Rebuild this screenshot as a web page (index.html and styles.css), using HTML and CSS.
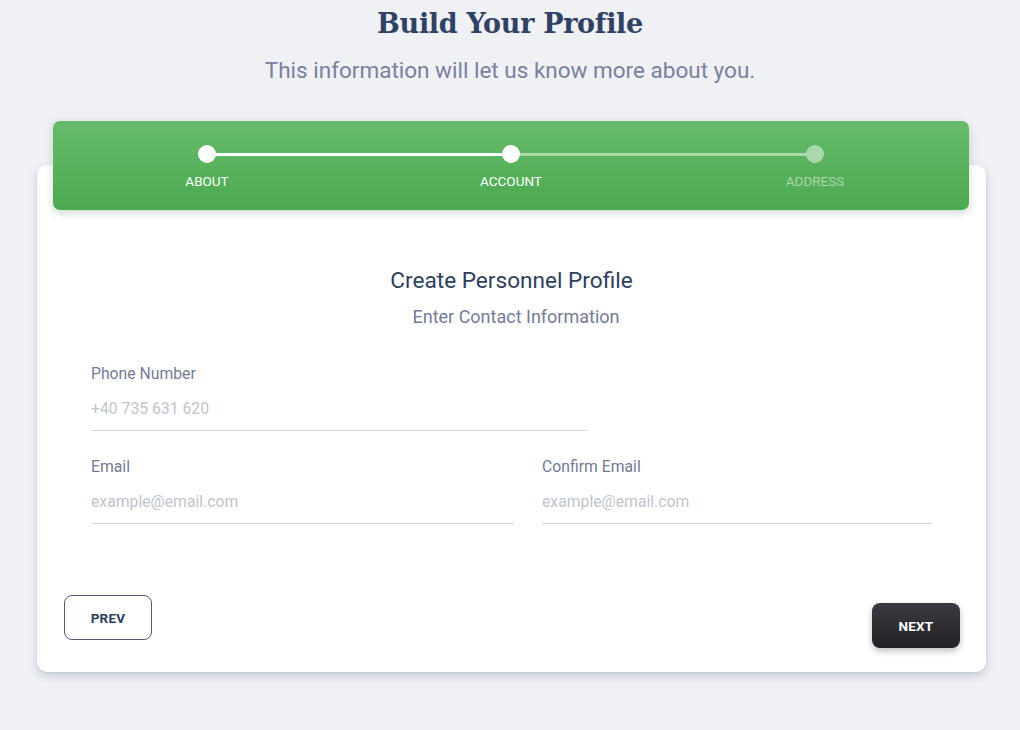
FILE: index.html
```html
<!DOCTYPE html>
<html lang="en">
<head>
<meta charset="utf-8">
<title>Build Your Profile</title>
<link rel="stylesheet" href="styles.css">
</head>
<body>
<main class="page">
  <h1 class="title">Build Your Profile</h1>
  <p class="subtitle">This information will let us know more about you.</p>

  <section class="card">
    <div class="steps-bar">
      <div class="step done">
        <span class="dot"></span>
        <span class="step-label">About</span>
      </div>
      <div class="step active">
        <span class="dot"></span>
        <span class="step-label">Account</span>
      </div>
      <div class="step todo">
        <span class="dot"></span>
        <span class="step-label">Address</span>
      </div>
    </div>

    <div class="card-body">
      <h2 class="card-title">Create Personnel Profile</h2>
      <p class="card-subtitle">Enter Contact Information</p>

      <div class="field field-phone">
        <label class="field-label">Phone Number</label>
        <input class="field-input" type="text" placeholder="+40 735 631 620">
      </div>

      <div class="row">
        <div class="field">
          <label class="field-label">Email</label>
          <input class="field-input" type="text" placeholder="example@email.com">
        </div>
        <div class="field">
          <label class="field-label">Confirm Email</label>
          <input class="field-input" type="text" placeholder="example@email.com">
        </div>
      </div>
    </div>

    <div class="card-footer">
      <button class="btn btn-prev" type="button">PREV</button>
      <button class="btn btn-next" type="button">NEXT</button>
    </div>
  </section>
</main>
</body>
</html>
```

FILE: styles.css
```css
* { box-sizing: border-box; }

html, body {
  margin: 0;
  padding: 0;
  background: #eff1f5;
}

body {
  font-family: Roboto, "Liberation Sans", Arial, sans-serif;
  color: #2f3e5f;
}

.page {
  width: 1020px;
  height: 730px;
  padding-top: 6px;
  overflow: hidden;
}

.title {
  margin: 0;
  text-align: center;
  font-family: "DejaVu Serif", "Liberation Serif", serif;
  font-weight: 700;
  font-size: 27px;
  line-height: 36px;
  color: #2f4265;
  letter-spacing: -0.3px;
}

.subtitle {
  margin: 13px 0 0;
  text-align: center;
  font-size: 22.5px;
  line-height: 30px;
  color: #7a809e;
}

.card {
  margin: 80px 0 0 37px;
  width: 949px;
  height: 507px;
  background: #ffffff;
  border-radius: 10px;
  box-shadow: 0 4px 10px rgba(40, 50, 80, 0.18), 0 1px 3px rgba(40, 50, 80, 0.08);
  display: flex;
  flex-direction: column;
}

.steps-bar {
  margin: -44px 17px 0 16px;
  height: 89px;
  border-radius: 7px;
  background: linear-gradient(180deg, #66bb6a 0%, #4caa50 100%);
  box-shadow: 0 3px 8px rgba(40, 80, 40, 0.22);
  display: grid;
  grid-template-columns: repeat(3, 1fr);
  padding: 24px 2px 0 2px;
}

.step {
  position: relative;
  display: flex;
  flex-direction: column;
  align-items: center;
  gap: 10px;
}

.step:not(:last-child)::after {
  content: "";
  position: absolute;
  left: 50%;
  top: 8px;
  width: 100%;
  height: 2.5px;
  background: #ffffff;
}

.step.active::after {
  background: rgba(255, 255, 255, 0.5);
}

.dot {
  position: relative;
  z-index: 1;
  width: 18px;
  height: 18px;
  border-radius: 50%;
  background: #ffffff;
}

.step.todo .dot {
  background: #acd8ad;
}

.step-label {
  font-size: 13.5px;
  line-height: 16px;
  text-transform: uppercase;
  color: #ffffff;
}

.step.todo .step-label {
  color: #a9d6aa;
}

.card-body {
  padding: 56px 54px 0 54px;
}

.card-title {
  margin: 0;
  text-align: center;
  font-weight: 400;
  font-size: 22.6px;
  line-height: 30px;
  color: #2f3e5f;
}

.card-subtitle {
  margin: 9px 0 0;
  padding-left: 9px;
  text-align: center;
  font-size: 18px;
  line-height: 24px;
  color: #757b99;
}

.field {
  display: flex;
  flex-direction: column;
}

.field-phone {
  margin-top: 35px;
  width: 496px;
}

.field-label {
  font-size: 15.75px;
  line-height: 20px;
  color: #757a97;
}

.field-input {
  margin-top: 11px;
  border: 0;
  border-bottom: 1px solid #d3d5d9;
  padding: 0 0 8px 0;
  height: 36px;
  font-family: inherit;
  font-size: 15.75px;
  line-height: 25px;
  color: #2f3e5f;
  background: transparent;
  outline: none;
}

.field-input::placeholder {
  color: #c1c4cc;
}

.row {
  margin-top: 26px;
  display: grid;
  grid-template-columns: 423px 390px;
  column-gap: 28px;
}

.card-footer {
  margin-top: auto;
  padding: 0 26px 24px 27px;
  display: flex;
  justify-content: space-between;
  align-items: flex-start;
}

.btn {
  width: 88px;
  height: 45px;
  border-radius: 8px;
  font-family: inherit;
  font-weight: 700;
  font-size: 13.5px;
  letter-spacing: 0.2px;
  cursor: pointer;
}

.btn-prev {
  background: #ffffff;
  border: 1px solid #4e5b7a;
  color: #2f3e5f;
}

.btn-next {
  margin-top: 8px;
  border: 0;
  color: #ffffff;
  background: linear-gradient(180deg, #3b3a40 0%, #222126 100%);
  box-shadow: 0 3px 6px rgba(0, 0, 0, 0.25);
}
```
